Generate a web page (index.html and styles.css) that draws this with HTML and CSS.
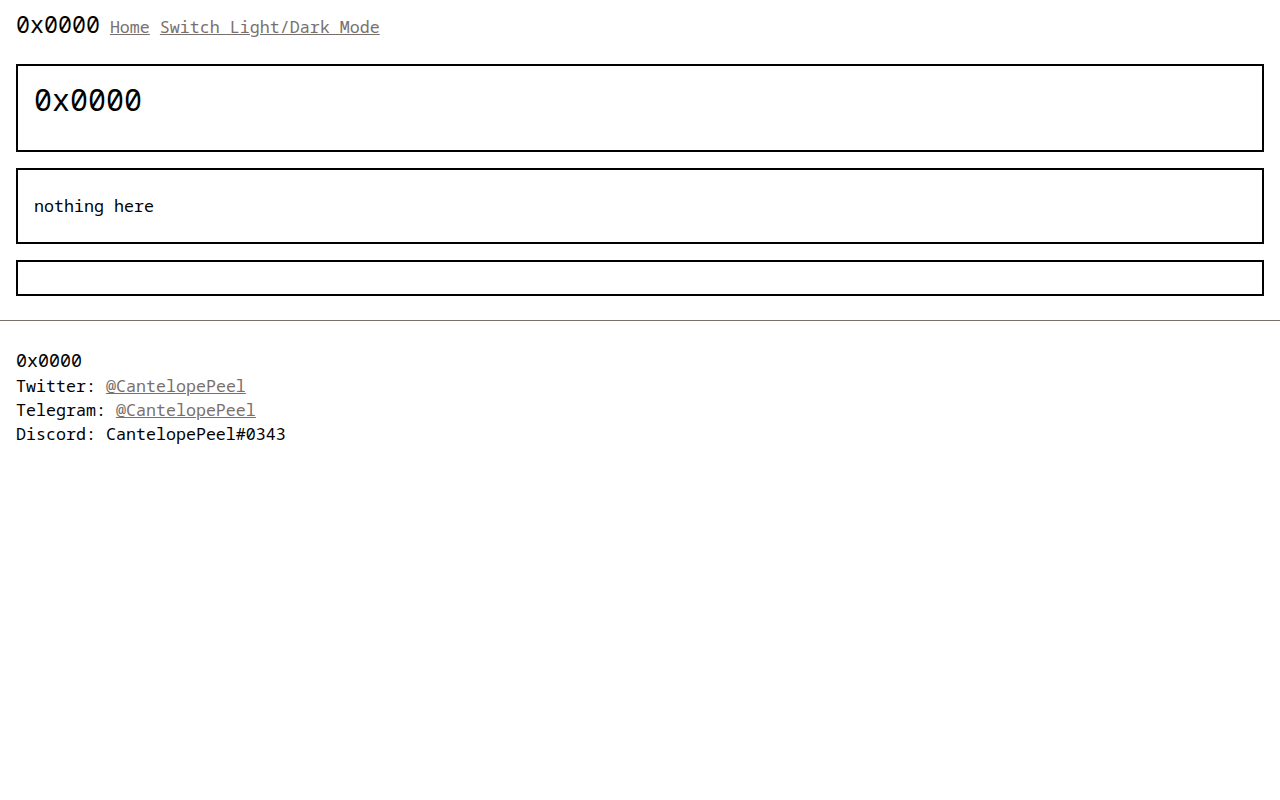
FILE: index.html
```html
<!DOCTYPE html>
<html>
<head>
  <title>0x0000</title>
  <link rel="stylesheet" href="styles.css">
</head>
<body>
  <div class="page">
    <header class="top">
      <span class="site-name">0x0000</span>
      <a href="#">Home</a>
      <a href="#">Switch Light/Dark Mode</a>
    </header>

    <div class="box">
      <h2>0x0000</h2>
    </div>
    <div class="box">
      <p>nothing here</p>
    </div>
    <div class="box"></div>
  </div>

  <hr>

  <footer>
    <div class="footer-name">0x0000</div>
    <div>Twitter: <a href="#">@CantelopePeel</a></div>
    <div>Telegram: <a href="#">@CantelopePeel</a></div>
    <div>Discord: CantelopePeel#0343</div>
  </footer>
</body>
</html>
```

FILE: styles.css
```css
body {
  margin: 0;
  font-family: "Noto Sans Mono", "DejaVu Sans Mono", monospace;
  font-size: 16.67px;
  line-height: 24px;
  color: #000;
  background-color: #fff;
}
a {
  color: #7a706b;
}
.page {
  padding: 12px 16px 0;
}
.top {
  display: flex;
  align-items: baseline;
  gap: 10px;
  height: 36px;
  margin-bottom: 16px;
}
.site-name {
  font-size: 23.3px;
}
.box {
  border: 2px solid #000;
  padding: 16px;
  margin-bottom: 16px;
}
.box h2 {
  margin: 0 0 16px;
  font-size: 30px;
  line-height: 36px;
  font-weight: normal;
}
.box p {
  margin: 8px 0;
}
hr {
  border: none;
  border-top: 1px solid #7a706b;
  margin: 24px 0 0;
}
footer {
  padding: 27px 16px;
}
.footer-name {
  font-size: 18.33px;
  margin-bottom: 2px;
}
```
